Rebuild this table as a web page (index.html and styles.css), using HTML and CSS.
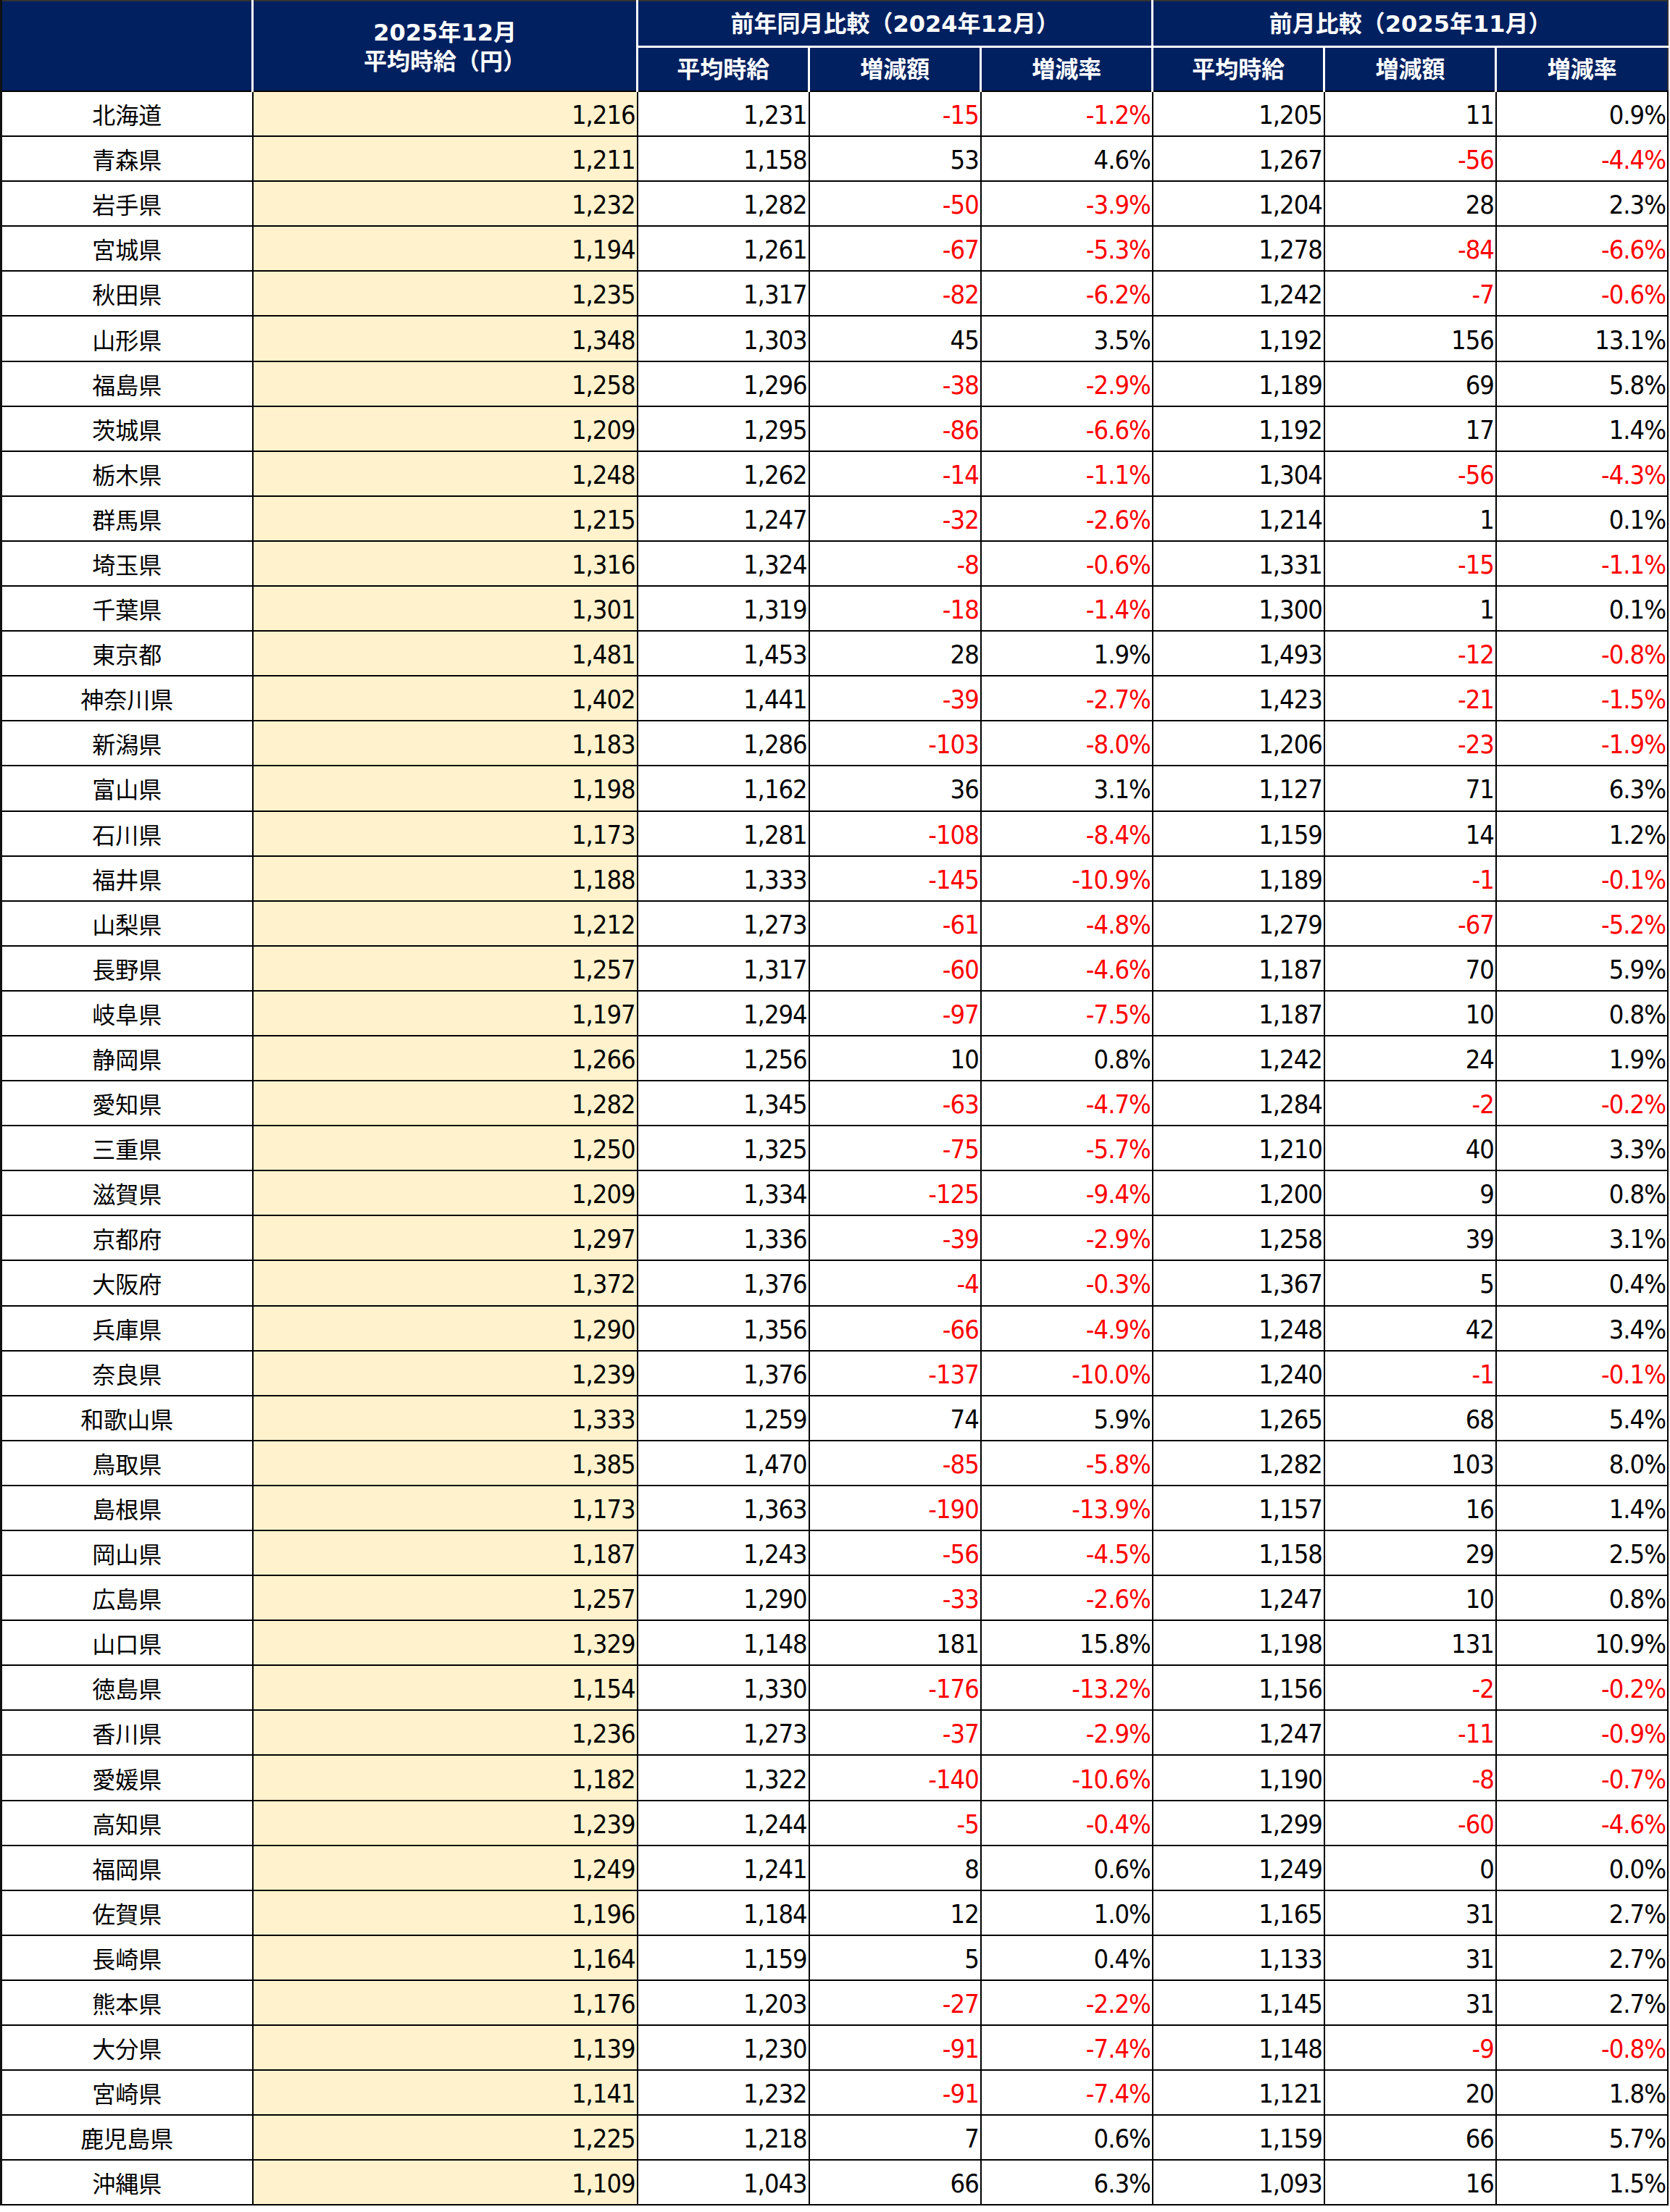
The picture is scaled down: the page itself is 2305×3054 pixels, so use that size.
FILE: index.html
```html
<!DOCTYPE html>
<html lang="ja">
<head>
<meta charset="utf-8">
<title>都道府県別 平均時給</title>
<link rel="stylesheet" href="styles.css">
</head>
<body>
<table class="wage">
<colgroup>
<col class="c-pref"><col class="c-main"><col class="c-d"><col class="c-d"><col class="c-d"><col class="c-d"><col class="c-d"><col class="c-d">
</colgroup>
<thead>
<tr class="h1">
<th rowspan="2" class="h-blank"></th>
<th rowspan="2" class="h-main">2025年12月<br>平均時給（円）</th>
<th colspan="3" class="h-group">前年同月比較（2024年12月）</th>
<th colspan="3" class="h-group">前月比較（2025年11月）</th>
</tr>
<tr class="h2">
<th>平均時給</th><th>増減額</th><th>増減率</th>
<th>平均時給</th><th>増減額</th><th>増減率</th>
</tr>
</thead>
<tbody id="rows">
<tr><td class="pref">北海道</td><td class="main">1,216</td><td>1,231</td><td class="neg">-15</td><td class="neg">-1.2%</td><td>1,205</td><td>11</td><td>0.9%</td></tr>
<tr><td class="pref">青森県</td><td class="main">1,211</td><td>1,158</td><td>53</td><td>4.6%</td><td>1,267</td><td class="neg">-56</td><td class="neg">-4.4%</td></tr>
<tr><td class="pref">岩手県</td><td class="main">1,232</td><td>1,282</td><td class="neg">-50</td><td class="neg">-3.9%</td><td>1,204</td><td>28</td><td>2.3%</td></tr>
<tr><td class="pref">宮城県</td><td class="main">1,194</td><td>1,261</td><td class="neg">-67</td><td class="neg">-5.3%</td><td>1,278</td><td class="neg">-84</td><td class="neg">-6.6%</td></tr>
<tr><td class="pref">秋田県</td><td class="main">1,235</td><td>1,317</td><td class="neg">-82</td><td class="neg">-6.2%</td><td>1,242</td><td class="neg">-7</td><td class="neg">-0.6%</td></tr>
<tr><td class="pref">山形県</td><td class="main">1,348</td><td>1,303</td><td>45</td><td>3.5%</td><td>1,192</td><td>156</td><td>13.1%</td></tr>
<tr><td class="pref">福島県</td><td class="main">1,258</td><td>1,296</td><td class="neg">-38</td><td class="neg">-2.9%</td><td>1,189</td><td>69</td><td>5.8%</td></tr>
<tr><td class="pref">茨城県</td><td class="main">1,209</td><td>1,295</td><td class="neg">-86</td><td class="neg">-6.6%</td><td>1,192</td><td>17</td><td>1.4%</td></tr>
<tr><td class="pref">栃木県</td><td class="main">1,248</td><td>1,262</td><td class="neg">-14</td><td class="neg">-1.1%</td><td>1,304</td><td class="neg">-56</td><td class="neg">-4.3%</td></tr>
<tr><td class="pref">群馬県</td><td class="main">1,215</td><td>1,247</td><td class="neg">-32</td><td class="neg">-2.6%</td><td>1,214</td><td>1</td><td>0.1%</td></tr>
<tr><td class="pref">埼玉県</td><td class="main">1,316</td><td>1,324</td><td class="neg">-8</td><td class="neg">-0.6%</td><td>1,331</td><td class="neg">-15</td><td class="neg">-1.1%</td></tr>
<tr><td class="pref">千葉県</td><td class="main">1,301</td><td>1,319</td><td class="neg">-18</td><td class="neg">-1.4%</td><td>1,300</td><td>1</td><td>0.1%</td></tr>
<tr><td class="pref">東京都</td><td class="main">1,481</td><td>1,453</td><td>28</td><td>1.9%</td><td>1,493</td><td class="neg">-12</td><td class="neg">-0.8%</td></tr>
<tr><td class="pref">神奈川県</td><td class="main">1,402</td><td>1,441</td><td class="neg">-39</td><td class="neg">-2.7%</td><td>1,423</td><td class="neg">-21</td><td class="neg">-1.5%</td></tr>
<tr><td class="pref">新潟県</td><td class="main">1,183</td><td>1,286</td><td class="neg">-103</td><td class="neg">-8.0%</td><td>1,206</td><td class="neg">-23</td><td class="neg">-1.9%</td></tr>
<tr><td class="pref">富山県</td><td class="main">1,198</td><td>1,162</td><td>36</td><td>3.1%</td><td>1,127</td><td>71</td><td>6.3%</td></tr>
<tr><td class="pref">石川県</td><td class="main">1,173</td><td>1,281</td><td class="neg">-108</td><td class="neg">-8.4%</td><td>1,159</td><td>14</td><td>1.2%</td></tr>
<tr><td class="pref">福井県</td><td class="main">1,188</td><td>1,333</td><td class="neg">-145</td><td class="neg">-10.9%</td><td>1,189</td><td class="neg">-1</td><td class="neg">-0.1%</td></tr>
<tr><td class="pref">山梨県</td><td class="main">1,212</td><td>1,273</td><td class="neg">-61</td><td class="neg">-4.8%</td><td>1,279</td><td class="neg">-67</td><td class="neg">-5.2%</td></tr>
<tr><td class="pref">長野県</td><td class="main">1,257</td><td>1,317</td><td class="neg">-60</td><td class="neg">-4.6%</td><td>1,187</td><td>70</td><td>5.9%</td></tr>
<tr><td class="pref">岐阜県</td><td class="main">1,197</td><td>1,294</td><td class="neg">-97</td><td class="neg">-7.5%</td><td>1,187</td><td>10</td><td>0.8%</td></tr>
<tr><td class="pref">静岡県</td><td class="main">1,266</td><td>1,256</td><td>10</td><td>0.8%</td><td>1,242</td><td>24</td><td>1.9%</td></tr>
<tr><td class="pref">愛知県</td><td class="main">1,282</td><td>1,345</td><td class="neg">-63</td><td class="neg">-4.7%</td><td>1,284</td><td class="neg">-2</td><td class="neg">-0.2%</td></tr>
<tr><td class="pref">三重県</td><td class="main">1,250</td><td>1,325</td><td class="neg">-75</td><td class="neg">-5.7%</td><td>1,210</td><td>40</td><td>3.3%</td></tr>
<tr><td class="pref">滋賀県</td><td class="main">1,209</td><td>1,334</td><td class="neg">-125</td><td class="neg">-9.4%</td><td>1,200</td><td>9</td><td>0.8%</td></tr>
<tr><td class="pref">京都府</td><td class="main">1,297</td><td>1,336</td><td class="neg">-39</td><td class="neg">-2.9%</td><td>1,258</td><td>39</td><td>3.1%</td></tr>
<tr><td class="pref">大阪府</td><td class="main">1,372</td><td>1,376</td><td class="neg">-4</td><td class="neg">-0.3%</td><td>1,367</td><td>5</td><td>0.4%</td></tr>
<tr><td class="pref">兵庫県</td><td class="main">1,290</td><td>1,356</td><td class="neg">-66</td><td class="neg">-4.9%</td><td>1,248</td><td>42</td><td>3.4%</td></tr>
<tr><td class="pref">奈良県</td><td class="main">1,239</td><td>1,376</td><td class="neg">-137</td><td class="neg">-10.0%</td><td>1,240</td><td class="neg">-1</td><td class="neg">-0.1%</td></tr>
<tr><td class="pref">和歌山県</td><td class="main">1,333</td><td>1,259</td><td>74</td><td>5.9%</td><td>1,265</td><td>68</td><td>5.4%</td></tr>
<tr><td class="pref">鳥取県</td><td class="main">1,385</td><td>1,470</td><td class="neg">-85</td><td class="neg">-5.8%</td><td>1,282</td><td>103</td><td>8.0%</td></tr>
<tr><td class="pref">島根県</td><td class="main">1,173</td><td>1,363</td><td class="neg">-190</td><td class="neg">-13.9%</td><td>1,157</td><td>16</td><td>1.4%</td></tr>
<tr><td class="pref">岡山県</td><td class="main">1,187</td><td>1,243</td><td class="neg">-56</td><td class="neg">-4.5%</td><td>1,158</td><td>29</td><td>2.5%</td></tr>
<tr><td class="pref">広島県</td><td class="main">1,257</td><td>1,290</td><td class="neg">-33</td><td class="neg">-2.6%</td><td>1,247</td><td>10</td><td>0.8%</td></tr>
<tr><td class="pref">山口県</td><td class="main">1,329</td><td>1,148</td><td>181</td><td>15.8%</td><td>1,198</td><td>131</td><td>10.9%</td></tr>
<tr><td class="pref">徳島県</td><td class="main">1,154</td><td>1,330</td><td class="neg">-176</td><td class="neg">-13.2%</td><td>1,156</td><td class="neg">-2</td><td class="neg">-0.2%</td></tr>
<tr><td class="pref">香川県</td><td class="main">1,236</td><td>1,273</td><td class="neg">-37</td><td class="neg">-2.9%</td><td>1,247</td><td class="neg">-11</td><td class="neg">-0.9%</td></tr>
<tr><td class="pref">愛媛県</td><td class="main">1,182</td><td>1,322</td><td class="neg">-140</td><td class="neg">-10.6%</td><td>1,190</td><td class="neg">-8</td><td class="neg">-0.7%</td></tr>
<tr><td class="pref">高知県</td><td class="main">1,239</td><td>1,244</td><td class="neg">-5</td><td class="neg">-0.4%</td><td>1,299</td><td class="neg">-60</td><td class="neg">-4.6%</td></tr>
<tr><td class="pref">福岡県</td><td class="main">1,249</td><td>1,241</td><td>8</td><td>0.6%</td><td>1,249</td><td>0</td><td>0.0%</td></tr>
<tr><td class="pref">佐賀県</td><td class="main">1,196</td><td>1,184</td><td>12</td><td>1.0%</td><td>1,165</td><td>31</td><td>2.7%</td></tr>
<tr><td class="pref">長崎県</td><td class="main">1,164</td><td>1,159</td><td>5</td><td>0.4%</td><td>1,133</td><td>31</td><td>2.7%</td></tr>
<tr><td class="pref">熊本県</td><td class="main">1,176</td><td>1,203</td><td class="neg">-27</td><td class="neg">-2.2%</td><td>1,145</td><td>31</td><td>2.7%</td></tr>
<tr><td class="pref">大分県</td><td class="main">1,139</td><td>1,230</td><td class="neg">-91</td><td class="neg">-7.4%</td><td>1,148</td><td class="neg">-9</td><td class="neg">-0.8%</td></tr>
<tr><td class="pref">宮崎県</td><td class="main">1,141</td><td>1,232</td><td class="neg">-91</td><td class="neg">-7.4%</td><td>1,121</td><td>20</td><td>1.8%</td></tr>
<tr><td class="pref">鹿児島県</td><td class="main">1,225</td><td>1,218</td><td>7</td><td>0.6%</td><td>1,159</td><td>66</td><td>5.7%</td></tr>
<tr><td class="pref">沖縄県</td><td class="main">1,109</td><td>1,043</td><td>66</td><td>6.3%</td><td>1,093</td><td>16</td><td>1.5%</td></tr>
</tbody>
</table>
</body>
</html>
```

FILE: styles.css
```css
html, body {
  margin: 0;
  padding: 0;
  background: #ffffff;
}

.wage {
  border-collapse: collapse;
  table-layout: fixed;
  width: 2303px;
  border-top: 2px solid #333333;
  border-left: 3px solid #111111;
  border-right: 2px solid #333333;
  border-bottom: 2px solid #333333;
  font-family: "DejaVu Sans Condensed", "Noto Sans CJK JP", sans-serif;
  color: #000000;
}

.c-pref { width: 347px; }
.c-main { width: 531px; }
.c-d { width: 237px; }

.wage th {
  background: #002060;
  color: #ffffff;
  font-family: "DejaVu Sans", "Noto Sans CJK JP", sans-serif;
  font-weight: 700;
  font-size: 32px;
  line-height: 40px;
  padding: 0;
  text-align: center;
  vertical-align: middle;
  border: 3px solid #ffffff;
}

.wage thead tr.h1 th { height: 61px; border-top: none; }
.wage thead tr.h2 th { height: 59px; border-bottom: 2px solid #000000; }
.wage thead tr.h1 .h-blank,
.wage thead tr.h1 .h-main { border-bottom: 2px solid #000000; }
.wage thead .h-blank { border-left: none; }
.wage thead tr th:last-child { border-right: none; }
.wage thead .h-main { padding-top: 2px; }
.wage thead .h-group { letter-spacing: 0; }

.wage td {
  height: 56.1px;
  padding: 4px 2px 0 0;
  border: 2px solid #000000;
  font-size: 36px;
  line-height: 40px;
  text-align: right;
  vertical-align: middle;
  white-space: nowrap;
  letter-spacing: -1px;
}

.wage td.pref {
  font-family: "Noto Sans CJK JP", sans-serif;
  font-size: 32px;
  letter-spacing: 0;
  text-align: center;
  padding: 0;
}

.wage td.main { background: #fff2cc; }
.wage td.neg { color: #ff0000; }
```
